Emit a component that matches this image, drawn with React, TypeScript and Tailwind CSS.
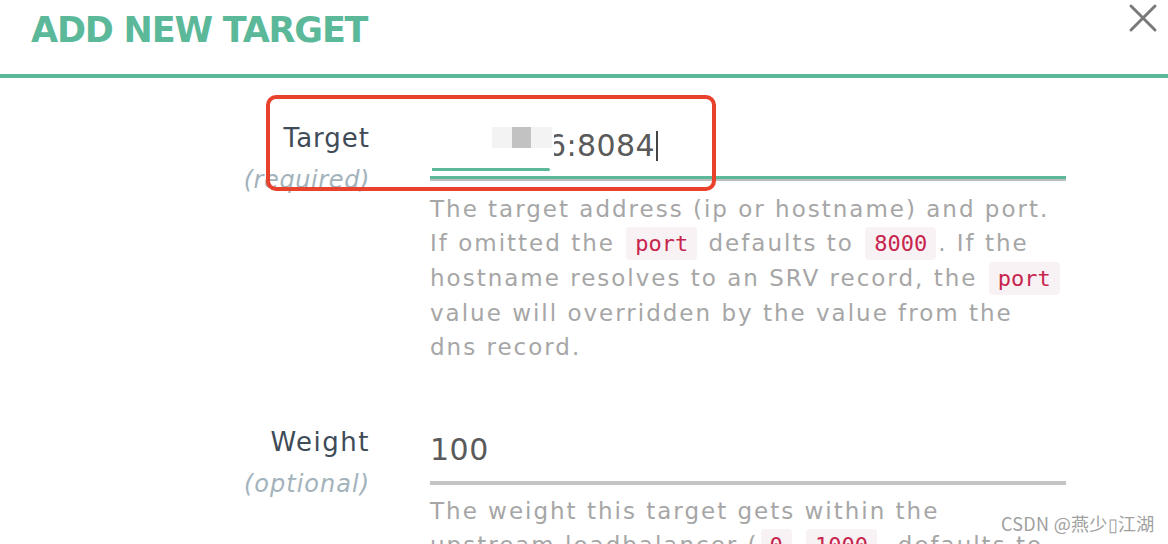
import React from "react";

const font = { fontFamily: '"DejaVu Sans", "Open Sans", sans-serif' };

function Code({ children }: { children: React.ReactNode }) {
  return (
    <code className="mx-[2px] rounded-[4px] bg-[#f9f2f4] px-[9px] py-[4px] font-['DejaVu_Sans_Mono',monospace] text-[22px] tracking-normal text-[#c7254e]">
      {children}
    </code>
  );
}

function Help({ children }: { children: React.ReactNode }) {
  return <div className="text-[23px] leading-[34px] tracking-[2px] text-[#a6a6a6]">{children}</div>;
}

export default function App() {
  return (
    <div className="relative h-[544px] w-[1168px] overflow-hidden bg-white" style={font}>
      {/* Header */}
      <div className="flex h-[78px] items-start justify-between border-b-[4px] border-[#5bb99a] pl-[31px] pr-[10px]">
        <h1 className="mt-[4px] text-[35px] font-bold tracking-[-1.2px] text-[#5bb99a]">ADD NEW TARGET</h1>
        <svg width="30" height="30" viewBox="0 0 30 30" className="mt-[3px]">
          <path d="M3 3 L27 27 M27 3 L3 27" stroke="#7a7a7a" strokeWidth="3" strokeLinecap="round" />
        </svg>
      </div>

      {/* Target row */}
      <div className="mt-[42px] grid grid-cols-[370px_636px] gap-x-[60px]">
        <div className="flex flex-col items-end">
          <div className="text-[26px] leading-[36px] tracking-[1px] text-[#3f4c57]">Target</div>
          <div className="mt-[6px] text-[24px] italic leading-[36px] tracking-[0.6px] text-[#a3b3bc]">(required)</div>
        </div>
        <div className="flex flex-col">
          <div className="relative h-[61px] border-b-[5px] border-[#5bb99a]">
            <div className="absolute inset-x-0 bottom-[-5px] h-[2px] bg-[#bdbdbd]" />
            <div className="flex items-center pl-[117px] pt-[6px]">
              <span className="text-[30px] leading-[40px] tracking-[0.4px] text-[#5a5a5a]">6:8084</span>
              <span className="ml-[1px] inline-block h-[30px] w-[2px] bg-[#444]" />
            </div>
            <div className="absolute left-0 top-0 h-[44px] w-[124px] bg-white" />
            <div className="absolute left-[62px] top-[7px] h-[21px] w-[60px] bg-[#f3f3f3]" />
            <div className="absolute left-[82px] top-[7px] h-[21px] w-[19px] bg-[#c2c2c2]" />
            <div className="absolute left-[2px] top-[48px] h-[3px] w-[118px] rounded-r-full bg-[#5bb99a]" />
          </div>
          <div className="mt-[11px]">
            <Help>
              The target address (ip or hostname) and port.
              <br />
              If omitted the <Code>port</Code> defaults to <Code>8000</Code>. If the
              <br />
              hostname resolves to an SRV record, the <Code>port</Code>
              <br />
              value will overridden by the value from the
              <br />
              dns record.
            </Help>
          </div>
        </div>
      </div>

      {/* Weight row */}
      <div className="mt-[60px] grid grid-cols-[370px_636px] gap-x-[60px]">
        <div className="flex flex-col items-end">
          <div className="text-[26px] leading-[36px] tracking-[1.5px] text-[#3f4c57]">Weight</div>
          <div className="mt-[6px] text-[24px] italic leading-[36px] tracking-[1px] text-[#a3b3bc]">(optional)</div>
        </div>
        <div className="flex flex-col">
          <div className="h-[61px] border-b-[4px] border-[#c4c4c4] pt-[6px]">
            <span className="text-[30px] leading-[40px] tracking-[0.5px] text-[#5a5a5a]">100</span>
          </div>
          <div className="mt-[9px]">
            <Help>
              The weight this target gets within the
              <br />
              upstream loadbalancer (<Code>0</Code>-<Code>1000</Code>, defaults to
            </Help>
          </div>
        </div>
      </div>

      {/* Annotation box */}
      <div className="absolute left-[266px] top-[95px] h-[96px] w-[450px] rounded-[10px] border-[4px] border-[#e8412c]" />

      {/* Watermark */}
      <div className="absolute left-[1001px] top-[510px] font-['Noto_Sans_CJK_SC',sans-serif] text-[18px] tracking-[0.3px] text-[#a0a0a0]">
        CSDN @燕少▯江湖
      </div>
    </div>
  );
}
